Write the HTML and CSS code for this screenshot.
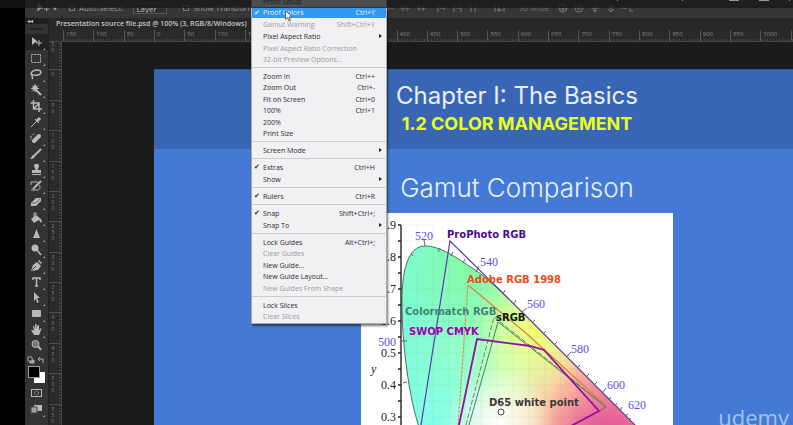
FILE: index.html
```
<!DOCTYPE html>
<html lang="en">
<head>
<meta charset="utf-8">
<title>Presentation source file.psd</title>
<link rel="stylesheet" href="styles.css">
</head>
<body>
<div class="player">
  <div class="app">
    <header class="options">
      <svg class="move-icon" viewBox="0 0 12 12"><path d="M1 1l5 5-3 .3L1 9zM7 7h5M9.500 4.500v5" fill="#999" stroke="#999"/></svg>
      <span class="caret">▾</span>
      <label class="opt"><input type="checkbox">Auto-Select:</label>
      <select class="layer" aria-label="Auto-select target"><option>Layer</option></select>
      <label class="opt"><input type="checkbox"><span class="clip">Show Transform Controls</span></label>
      <svg class="align-icons" viewBox="0 0 250 12">
        <g stroke="#757575" fill="none">
          <path d="M3 7h8M5 4v6M17 7h10M20 4v6M24 4v6M34 7h9M36 4v6M40 4v6M55 3v8M57 7h4M61 5v4M71 3v8M73 7h4M78 3v8M88 3v8M85 6h3M92 4v7M112 3v8M121 3v8M114 9h5M116 4v7"/>
          <circle cx="180" cy="7" r="4"/><path d="M176 8h8M180 3v7"/><circle cx="196" cy="7" r="4"/><circle cx="196" cy="7" r="1.500"/>
          <path d="M208 7h8M212 3v8M210 9l2 2 2-2M224 6h8M228 3v8M225 8l3 3 3-3M238 7h6M247 4v6h4"/>
        </g>
        <text x="136" y="10">3D Mode:</text>
      </svg>
    </header>
    <div class="work">
      <nav class="tools" aria-label="Tools">
        <div class="collapse">◂◂</div>
        <div class="grip"></div>
        <button class="tool active" aria-label="Move"><svg viewBox="0 0 16 16"><path class="f" d="M4 3l6 5-3 .5L4 11z"/><path d="M8 9h6M11 6v6"/></svg></button>
        <button class="tool" aria-label="Marquee"><svg viewBox="0 0 16 16"><path stroke-dasharray="2 1" d="M3.500 4.500h9v8h-9z"/></svg></button>
        <button class="tool" aria-label="Lasso"><svg viewBox="0 0 16 16"><path stroke-width="1.500" d="M5 10C1 8 4 4 9 4s5 4 1 5-5-1-6 0 2 2 0 4"/></svg></button>
        <button class="tool" aria-label="Magic wand"><svg viewBox="0 0 16 16"><circle class="f" cx="7" cy="6" r="2.500"/><path stroke-width="2" d="M7 7l6 6"/><path d="M7 2v8M3 6.500h8M4 3.500l5 5M10 3.500l-6 6"/></svg></button>
        <button class="tool" aria-label="Crop"><svg viewBox="0 0 16 16"><path stroke-width="1.500" d="M5.500 2v9H14M2.500 5H11v9M6 10.500l5-5"/></svg></button>
        <button class="tool" aria-label="Eyedropper"><svg viewBox="0 0 16 16"><path d="M3 13l6-6"/><path stroke-width="3" d="M8.500 7.500L12 4"/><path d="M7 5l4 4"/></svg></button>
        <button class="tool" aria-label="Healing brush"><svg viewBox="0 0 16 16"><path stroke-width="4" stroke-linecap="round" d="M6 11l5-5"/><path stroke-dasharray="1 1" d="M3 7c0-2 2-3 4-3M3 7v4"/></svg></button>
        <button class="tool" aria-label="Brush"><svg viewBox="0 0 16 16"><path stroke-width="2" d="M6 10l7-7"/><path class="f" d="M7 9c0 3-2 4-5 4 2-1 1-4 4-4z"/></svg></button>
        <button class="tool" aria-label="Clone stamp"><svg viewBox="0 0 16 16"><path class="f" d="M6 4c0-3 5-3 5 0L9.500 8H13v3H4V8h3.500zM4 12h9v1H4z"/></svg></button>
        <button class="tool" aria-label="History brush"><svg viewBox="0 0 16 16"><path d="M3 4h7M3 4v3M3 12h6c3 0 4-3 2-5"/><path stroke-width="2" d="M5 11l8-8"/></svg></button>
        <button class="tool" aria-label="Eraser"><svg viewBox="0 0 16 16"><path class="f" d="M3 9l5-5h5v3l-5 5H3z"/><path stroke="#666" d="M4 9h4l4-4"/></svg></button>
        <button class="tool" aria-label="Paint bucket"><svg viewBox="0 0 16 16"><path class="f" d="M3 9l5-4 5 4c1 2 1 3 0 4l-2-3-5 3z"/><path d="M8 8V3H6v4"/></svg></button>
        <button class="tool" aria-label="Sharpen"><svg viewBox="0 0 16 16"><path class="f" d="M8.500 3L12 12H5z"/></svg></button>
        <button class="tool" aria-label="Dodge"><svg viewBox="0 0 16 16"><circle class="f" cx="7" cy="6" r="3.500"/><path stroke-width="1.500" d="M9 8l4 5"/></svg></button>
        <button class="tool" aria-label="Pen"><svg viewBox="0 0 16 16"><path class="f" d="M3 13l2-6 4-3 4 4-3 4z"/><path class="f" d="M10 3l1-1 3 3-1 1z"/><path stroke="#444" d="M4 12l4-4"/></svg></button>
        <button class="tool" aria-label="Type"><svg viewBox="0 0 16 16"><path stroke-width="1.500" d="M5 6V4h7v2M8.500 4v8M7 12h3"/></svg></button>
        <button class="tool" aria-label="Path selection"><svg viewBox="0 0 16 16"><path class="f" d="M6 2l6 6H9l2 4-2 1-1-4-2 2z"/></svg></button>
        <button class="tool" aria-label="Rectangle"><svg viewBox="0 0 16 16"><rect class="f" x="4" y="4" width="9" height="7" rx="1"/></svg></button>
        <button class="tool" aria-label="Hand"><svg viewBox="0 0 16 16"><path class="f" d="M6 13L3 8l2 0 1 1-1-5h1l1 3V2h1.500v5l1-4H11v5l2-2 .5 1-2.500 6z"/></svg></button>
        <button class="tool last" aria-label="Zoom"><svg viewBox="0 0 16 16"><circle cx="7.500" cy="6" r="3.500" fill="#777"/><path stroke-width="2" d="M10 8l3 4"/></svg></button>
        <svg class="swap" viewBox="0 0 24 12"><g fill="none" stroke="#aaa"><path fill="#aaa" d="M5 6h4v3H5z"/><path fill="#222" d="M3 3h4v4H3z"/><path d="M14 5h4v4M15 3l-2 2 2 2"/></g></svg>
        <div class="swatches"><i class="fore"></i><i class="back"></i></div>
        <button class="tool last" aria-label="Quick mask"><svg viewBox="0 0 16 16"><rect x="3.500" y="4.500" width="10" height="7"/><circle cx="8.500" cy="8" r="2" stroke-dasharray="1 1"/></svg></button>
        <button class="tool" aria-label="Screen mode"><svg viewBox="0 0 16 16"><path class="f" d="M6 4h8v6H6z"/><path class="g" d="M3 6h6v6H3z"/></svg></button>
      </nav>
      <section class="document">
        <div class="tab">Presentation source file.psd @ 100% (3, RGB/8/Windows)</div>
        <div class="ruler-top"><span>150</span><span>100</span><span>50</span><span>0</span><span>50</span><span>100</span><span>150</span><span></span><span></span><span></span><span></span><span>400</span><span>450</span><span>500</span><span>550</span><span>600</span><span>650</span><span>700</span><span>750</span><span>800</span><span>850</span><span>900</span><span>950</span><span>1000</span><span></span></div>
        <div class="view">
          <div class="ruler-side"><div class="marks"><span>50</span><span>0</span><span>50</span><span>100</span><span>150</span><span>200</span><span>250</span><span>300</span><span>350</span><span>400</span><span>450</span><span>500</span><span>550</span></div></div>
          <main class="canvas">
            <article class="slide">
              <header class="slide-head">
                <h1>Chapter I: The Basics</h1>
                <p>1.2 COLOR MANAGEMENT</p>
              </header>
              <h2>Gamut Comparison</h2>
              <svg class="chart" viewBox="361 213 312 212" role="img" aria-label="Chromaticity diagram">
                <defs>
                  <linearGradient id="base" gradientUnits="userSpaceOnUse" x1="405" y1="340" x2="610" y2="410"><stop offset="0" stop-color="#7efbd8"/><stop offset=".3" stop-color="#98ffca"/><stop offset=".52" stop-color="#dcffbc"/><stop offset=".72" stop-color="#fbd2a0"/><stop offset="1" stop-color="#ee7888"/></linearGradient>
                  <radialGradient id="yellow" gradientUnits="userSpaceOnUse" cx="538" cy="326" r="66"><stop offset="0" stop-color="#f4fb66"/><stop offset=".5" stop-color="#eaff88" stop-opacity=".6"/><stop offset="1" stop-color="#e0ff98" stop-opacity="0"/></radialGradient>
                  <radialGradient id="cyan" gradientUnits="userSpaceOnUse" cx="425" cy="440" r="90"><stop offset="0" stop-color="#80fff4"/><stop offset="1" stop-color="#80fff0" stop-opacity="0"/></radialGradient>
                  <radialGradient id="green" gradientUnits="userSpaceOnUse" cx="475" cy="262" r="90"><stop offset="0" stop-color="#86fa9c"/><stop offset="1" stop-color="#80fbab" stop-opacity="0"/></radialGradient>
                  <radialGradient id="white" gradientUnits="userSpaceOnUse" cx="498" cy="424" r="55"><stop offset="0" stop-color="#fff"/><stop offset=".4" stop-color="#fff8f6" stop-opacity=".7"/><stop offset="1" stop-color="#fff" stop-opacity="0"/></radialGradient>
                  <radialGradient id="pink" gradientUnits="userSpaceOnUse" cx="605" cy="450" r="85"><stop offset="0" stop-color="#e04090"/><stop offset=".4" stop-color="#e8609c" stop-opacity=".8"/><stop offset="1" stop-color="#f8a0b0" stop-opacity="0"/></radialGradient>
                  <path id="locus" d="M420 430C409 398 403 350 402 310C401 270 408 246 425 246C440 246 456 257 478 272C494 284 510 300 527 317L640 430Z"/>
                </defs>
                <path class="grid" d="M417 225v200M433 225v200M449 241v184M465 257v168M481 273v152M497 289v136M513 305v120M529 321v104M545 337v88M561 353v72M577 369v56M593 385v40M609 401v24M401 225h32M401 241h48M401 257h64M401 273h80M401 289h96M401 305h112M401 321h128M401 337h144M401 353h160M401 369h176M401 385h192M401 401h208M401 417h224"/>
                <use href="#locus" fill="url(#base)"/><use href="#locus" fill="url(#green)"/><use href="#locus" fill="url(#cyan)"/><use href="#locus" fill="url(#yellow)"/><use href="#locus" fill="url(#pink)"/><use href="#locus" fill="url(#white)"/>
                <use href="#locus" fill="none" stroke="#447560"/>
                <path class="grid over" d="M417 270v145M433 250v175M449 257v168M465 267v158M481 275v150M497 289v136M513 305v120M529 321v104M545 337v88M561 353v72M577 369v56M593 385v40M403 289h93M403 305h109M403 321h126M404 337h141M406 353h155M409 369h168M411 385h182M414 401h195M418 417h209"/>
                <path class="axis" d="M401 225v200"/>
                <path class="ticks" d="M398 225h3M398 241h3M398 257h3M398 273h3M398 289h3M398 305h3M398 321h3M398 337h3M398 353h3M398 369h3M398 385h3M398 401h3M398 417h3"/>
                <path class="wave" d="M425 246l-1-6M411 253l2 3M440 248l-2 4M451 256l2-4M463 263l2-4M476 272l3-6M490 283l2-4M503 294l2-4M514 304l2-4M522 312l5-4M532 323l3-3M543 334l3-3M554 345l3-3M566 357l5-5M577 368l3-3M586 377l3-3M594 385l3-3M602 393l4-5M609 400l2-3M615 406l2-3M620 411l2-4M625 416l3-2M629 420l2-2M401 341h6M407 382l-4 1"/>
                <path class="line prophoto" d="M421 425L450 241L525 315L636 426"/>
                <path class="line adobe-side" d="M458 425L468 285"/><path class="line adobe" d="M468 285L527 334L606 406"/>
                <path class="line match" d="M466 425L494 317L603 404"/>
                <path class="line srgb" d="M469 425L498 322L606 407L599 411"/>
                <path class="line swop" d="M459 425L477 339L530 346L544 350L599 411L571 426"/>
                <circle cx="501" cy="412" r="3" fill="none" stroke="#444"/>
                <g class="num"><text x="381" y="229">0.9</text><text x="381" y="261">0.8</text><text x="381" y="293">0.7</text><text x="381" y="325">0.6</text><text x="381" y="357">0.5</text><text x="381" y="389">0.4</text><text x="381" y="421">0.3</text><text class="y" x="371" y="373">y</text></g>
                <g class="nm"><text x="415" y="240">520</text><text x="480" y="266">540</text><text x="527" y="308">560</text><text x="571" y="353">580</text><text x="607" y="389">600</text><text x="628" y="409">620</text><text x="378" y="346">500</text></g>
                <g class="names"><text x="447" y="238" fill="#4a0b8c">ProPhoto RGB</text><text x="467" y="283" fill="#ed4a22">Adobe RGB 1998</text><text x="405" y="315" fill="#3f8572">Colormatch RGB</text><text x="496" y="321" fill="#111">sRGB</text><text x="409" y="335" fill="#a000ac">SWOP CMYK</text><text x="489" y="406" fill="#3c3838">D65 white point</text></g>
              </svg>
            </article>
          </main>
        </div>
      </section>
    </div>
  </div>
  <div class="menu" role="menu" aria-label="View">
    <div class="group"><button>Proof Setup</button><button class="on hot">Proof Colors<kbd>Ctrl+Y</kbd></button><button disabled>Gamut Warning<kbd>Shift+Ctrl+Y</kbd></button><button class="sub">Pixel Aspect Ratio</button><button disabled>Pixel Aspect Ratio Correction</button><button disabled>32-bit Preview Options...</button></div>
    <div class="group"><button>Zoom In<kbd>Ctrl++</kbd></button><button>Zoom Out<kbd>Ctrl+-</kbd></button><button>Fit on Screen<kbd>Ctrl+0</kbd></button><button>100%<kbd>Ctrl+1</kbd></button><button>200%</button><button>Print Size</button></div>
    <div class="group"><button class="sub">Screen Mode</button></div>
    <div class="group"><button class="on">Extras<kbd>Ctrl+H</kbd></button><button class="sub">Show</button></div>
    <div class="group"><button class="on">Rulers<kbd>Ctrl+R</kbd></button></div>
    <div class="group"><button class="on">Snap<kbd>Shift+Ctrl+;</kbd></button><button class="sub">Snap To</button></div>
    <div class="group"><button>Lock Guides<kbd>Alt+Ctrl+;</kbd></button><button disabled>Clear Guides</button><button>New Guide...</button><button>New Guide Layout...</button><button disabled>New Guides From Shape</button></div>
    <div class="group"><button>Lock Slices</button><button disabled>Clear Slices</button></div>
  </div>
  <svg class="pointer" viewBox="0 0 8 12"><path d="M.5.500v9l2-2 1.500 3.500 1.500-.6L4 7h3z" fill="#fff" stroke="#567"/></svg>
  <div class="shade"><i class="dot"></i><i class="dot"></i><i class="dash"></i><i class="dash"></i><i class="dot"></i></div>
  <div class="brand">udemy</div>
</div>
</body>
</html>
```

FILE: styles.css
```
* { box-sizing: border-box; }
body { margin: 0; background: #000; font-family: "Open Sans", sans-serif; }
button { border: 0; padding: 0; margin: 0; background: none; color: inherit; font: inherit; }
h1, h2, p { margin: 0; }

.player { position: relative; height: 100vh; overflow: hidden; padding-left: 25px; }
.app { height: 100%; display: flex; flex-direction: column; background: #1c1b1c; }

.options { flex: none; height: 18px; display: flex; align-items: center; gap: 4px; padding: 0 0 2px 12px; background: #373637; color: #989898; font-size: 8px; line-height: 10px; overflow: hidden; white-space: nowrap; }
.move-icon { width: 12px; height: 12px; }
.caret { margin-right: 8px; }
.opt { display: flex; align-items: center; gap: 4px; }
.opt input { appearance: none; width: 6px; height: 6px; margin: 0; border: 1px solid #777; }
.clip { width: 66px; overflow: hidden; }
.layer { appearance: none; width: 34px; height: 11px; border: 1px solid #555; padding: 0 2px; margin: 0 12px 0 6px; background: #303030; color: #bbb; font: inherit; }
.align-icons { position: absolute; left: 383px; top: 1px; width: 250px; height: 12px; }
.align-icons text { font-size: 7px; fill: #757575; }

.work { flex: 1; min-height: 0; display: flex; }
.tools { flex: none; width: 24px; display: flex; flex-direction: column; align-items: stretch; background: #343334; border-right: 1px solid #202020; }
.collapse { height: 6px; background: #1e1e1e; color: #ccc; font-size: 6px; line-height: 6px; padding-left: 2px; }
.grip { height: 4px; margin: 2px 5px 4px; border-bottom: 2px solid #222; }
.tool { position: relative; flex: none; height: 16px; display: flex; justify-content: center; align-items: center; }
.tool.active { background: #242324; }
.tool::after { content: ""; position: absolute; right: 3px; bottom: 0; border: 1px solid; border-color: transparent #aaa #aaa transparent; }
.tool.last::after { display: none; }
.tool svg { width: 16px; height: 16px; margin-right: 2px; fill: none; stroke: #b8b8b8; }
.tool .f { fill: #b8b8b8; stroke: none; }
.tool .g { fill: #a0a0a0; stroke: #444; }
.swap { flex: none; width: 24px; height: 12px; }
.swatches { flex: none; display: grid; grid-template-columns: 6px 6px 5px; grid-template-rows: 6px 6px 5px; margin: 0 0 2px 3px; }
.fore { grid-area: 1 / 1 / 3 / 3; z-index: 1; background: #000; border: 1px solid #999; }
.back { grid-area: 2 / 2 / 4 / 4; background: #fff; }

.document { flex: 1; min-width: 0; display: flex; flex-direction: column; }
.tab { flex: none; height: 12px; padding-left: 7px; background: #292829; color: #c4c4c4; font-size: 7px; line-height: 12px; font-weight: 600; white-space: nowrap; }
.ruler-top { flex: none; height: 12px; display: grid; grid-template-columns: repeat(25, 1fr); padding-left: 14px; margin-right: -28px; background: #2b2a2b; border-bottom: 1px solid #444; }
.ruler-top span { border-left: 1px solid #555; padding-left: 2px; color: #838383; font-size: 6px; line-height: 9px; background: repeating-linear-gradient(90deg, #484848 0 1px, transparent 1px 10%) bottom / 100% 2px no-repeat; }
.view { flex: 1; min-height: 0; display: flex; overflow: hidden; }
.ruler-side { flex: none; width: 13px; overflow: hidden; background: #2b2a2b; border-right: 1px solid #444; }
.marks { height: calc(100% + 12px); margin-top: -3px; display: grid; grid-template-rows: repeat(13, 1fr); }
.marks span { border-top: 1px solid #4c4c4c; writing-mode: vertical-rl; text-orientation: upright; color: #808080; font-size: 5px; line-height: 6px; padding: 1px 5px 0 0; background: repeating-linear-gradient(#484848 0 1px, transparent 1px 10%) right / 2px 100% no-repeat; }

.canvas { flex: 1; min-width: 0; padding: 27px 0 0 92px; }
.slide { margin-right: -87px; height: 100%; background: #447ad6; color: #e6f0ff; text-align: center; display: flex; flex-direction: column; align-items: center; font-family: Inter, sans-serif; }
.slide-head { align-self: stretch; flex: none; height: 80px; padding-top: 11px; background: #3866b5; border-top: 1px solid #2852a0; }
h1, h2 { line-height: 30px; }
h1 { font-size: 24px; font-weight: 400; }
.slide-head p { color: #eaff20; font-size: 18px; line-height: 26px; font-weight: 700; }
h2 { margin: 24px 0 10px; font-size: 26px; font-weight: 300; }
.chart { flex: none; width: 312px; height: 212px; background: #fff; }
.grid { stroke: #f0f0f0; fill: none; }
.grid.over { stroke: #608060; stroke-opacity: .08; }
.axis { stroke: #333; stroke-width: 1.500; }
.ticks { stroke: #222; stroke-width: 1.500; }
.wave { stroke: #666; stroke-width: 1; }
.line { fill: none; stroke-width: 1.200; }
.prophoto { stroke: #5a3da8; }
.adobe { stroke: #e2803c; }
.adobe-side { stroke: #c99a50; stroke-dasharray: 3 1; }
.match { stroke: #578b78; stroke-width: 1; stroke-dasharray: 5 2; }
.srgb { stroke: #4d7868; stroke-width: 1; }
.line.swop { stroke: #92109f; stroke-width: 1.800; }
.num text { font: 12px "Liberation Serif", serif; fill: #222; }
.num .y { font-style: italic; }
.nm text { font: 12px "Liberation Serif", serif; fill: #5a50e8; }
.names text { font: bold 10px "DejaVu Sans", sans-serif; }

.menu { position: absolute; left: 251px; top: -7px; width: 136px; padding: 1px 0; background: #f1f0f2; border: 1px solid #aaa; box-shadow: 1px 2px 2px #0008; color: #2c2c30; font-size: 7px; font-weight: 500; }
.group { display: flex; flex-direction: column; }
.group + .group { border-top: 1px solid #ccc; margin-top: 2px; padding-top: 2px; }
.group button { position: relative; height: 12px; display: flex; justify-content: space-between; align-items: center; padding: 0 11px; line-height: 11px; white-space: nowrap; text-align: left; }
.group button:nth-child(even):not(.sub) { height: 11px; }
.group button:disabled { color: #9c9b9f; }
.group kbd { font: inherit; }
.group .hot { background: #3399f3; color: #e4f2ff; }
.on::before { content: "✔"; position: absolute; left: 2px; font: 7px "DejaVu Sans", sans-serif; }
.sub::after { content: ""; margin-right: -7px; border: 2px solid transparent; border-left: 3px solid #222; border-right: 0; }
.pointer { position: absolute; left: 285px; top: 10px; width: 8px; height: 12px; }
.shade { position: absolute; inset: 0 0 auto; height: 8px; background: #161617c0; display: flex; justify-content: flex-end; padding-right: 3px; }
.shade i { height: 1px; background: #999; }
.dot { width: 1px; margin-right: 64px; }
.dot + .dot { margin-right: 46px; }
.dash { width: 10px; margin-right: 20px; }
.dash + .dot { margin-right: 0; }
.brand { position: absolute; right: 4px; bottom: -6px; color: #9fc3ef; font: 400 22px/28px "Open Sans", sans-serif; }
```
